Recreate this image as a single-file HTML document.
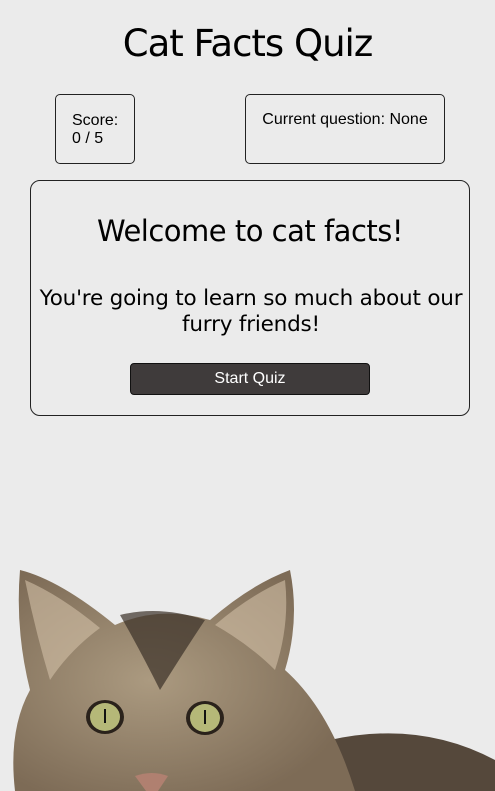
<!DOCTYPE html>
<html><head><style>
html,body{margin:0;padding:0;}
body{width:495px;height:791px;background:#ebebeb;position:relative;overflow:hidden;font-family:"Liberation Sans",sans-serif;color:#000;}
h1{position:absolute;top:22px;left:0;width:495px;text-align:center;margin:0;font-family:"DejaVu Sans",sans-serif;font-weight:normal;font-size:37px;letter-spacing:-1px;}
.box{position:absolute;border:1px solid #222;border-radius:5px;box-sizing:border-box;font-size:16px;}
.btn{position:absolute;left:130px;top:363px;width:240px;height:32px;background:#3f3b3b;color:#fff;border:1px solid #111;border-radius:4px;box-sizing:border-box;text-align:center;line-height:30px;font-size:16px;}
</style></head><body>
<h1>Cat Facts Quiz</h1>
<div class="box" style="left:55px;top:94px;width:80px;height:70px;padding:17px 0 0 16px;line-height:18px;">Score:<br>0 / 5</div>
<div class="box" style="left:245px;top:94px;width:200px;height:70px;padding:16px 0 0 0;text-align:center;">Current question: None</div>
<div class="box" style="left:30px;top:180px;width:440px;height:236px;border-radius:10px;text-align:center;">
<div style="position:absolute;top:33px;width:100%;font-family:'DejaVu Sans',sans-serif;font-size:29px;letter-spacing:-0.5px;">Welcome to cat facts!</div>
<div style="position:absolute;top:105px;left:-5px;width:450px;font-family:'DejaVu Sans',sans-serif;font-size:21.5px;line-height:26px;letter-spacing:-0.2px;">You're going to learn so much about our furry friends!</div>
</div>
<div class="btn">Start Quiz</div>
<svg style="position:absolute;left:0;top:0" width="495" height="791">
<defs>
<radialGradient id="f" cx="0.4" cy="0.5" r="0.6"><stop offset="0" stop-color="#ab9a80"/><stop offset="1" stop-color="#7d6b56"/></radialGradient>
</defs>
<path d="M330 740 Q420 720 495 760 L495 791 L300 791 Z" fill="#55483b"/>
<path d="M20 570 Q60 580 115 625 Q160 605 210 620 Q250 585 290 570 Q300 620 285 670 Q330 710 355 791 L15 791 Q8 730 30 690 Q15 630 20 570 Z" fill="url(#f)"/>
<path d="M25 580 Q60 595 100 628 Q70 650 50 680 Q35 630 25 580Z" fill="#d2c0a6" opacity="0.6"/>
<path d="M285 580 Q250 595 215 625 Q250 645 275 670 Q290 625 285 580Z" fill="#d2c0a6" opacity="0.6"/>
<path d="M120 615 Q160 605 205 620 Q185 650 160 690 Q140 650 120 615Z" fill="#3b3128" opacity="0.7"/>
<ellipse cx="105" cy="717" rx="19" ry="17" fill="#2a221b"/>
<ellipse cx="105" cy="717" rx="15" ry="14" fill="#b5b878"/>
<ellipse cx="205" cy="718" rx="19" ry="17" fill="#2a221b"/>
<ellipse cx="205" cy="718" rx="15" ry="14" fill="#b5b878"/>
<rect x="104" y="709" width="2" height="14" fill="#111"/>
<rect x="204" y="710" width="2" height="14" fill="#111"/>
<path d="M135 776 Q152 770 168 776 L158 791 L146 791 Z" fill="#b08070"/>
</svg>
</body></html>
